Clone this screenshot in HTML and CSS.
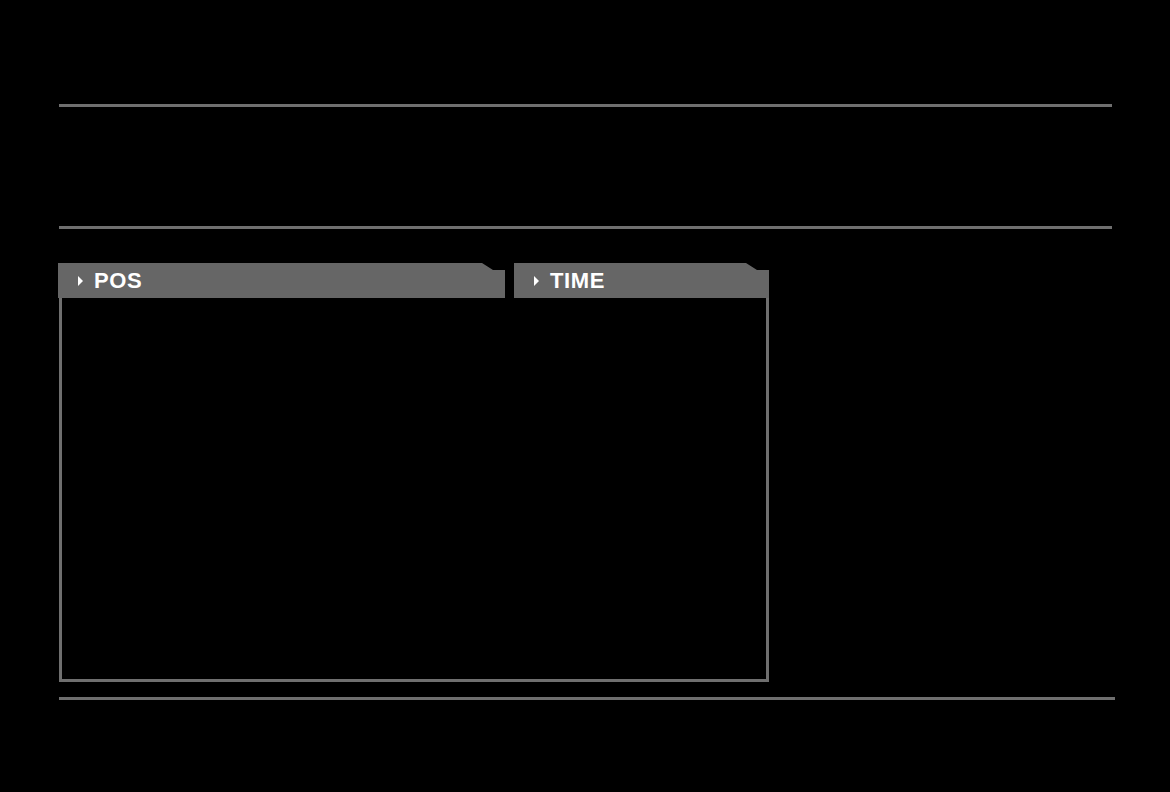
FILE: index.html
```html
<!DOCTYPE html>
<html>
<head>
<meta charset="utf-8">
<link rel="stylesheet" href="styles.css">
</head>
<body>
<div class="page">
  <div class="rule"></div>
  <div class="band"></div>
  <div class="rule"></div>
  <div class="panel">
    <div class="tabs">
      <div class="tab tab-pos"><span class="arrow"></span><span class="label">POS</span></div>
      <div class="tab tab-time"><span class="arrow"></span><span class="label">TIME</span></div>
    </div>
    <div class="box"></div>
  </div>
  <div class="rule rule-wide"></div>
</div>
</body>
</html>
```
FILE: styles.css
```css
html, body {
  margin: 0;
  padding: 0;
  background: #000;
}
.page {
  padding: 104px 0 0 59px;
  font-family: "Liberation Sans", Arial, sans-serif;
}
.rule {
  width: 1053px;
  height: 3px;
  background: #6f6f6f;
}
.rule-wide {
  width: 1056px;
  margin-top: 15px;
}
.band {
  height: 119px;
}
.panel {
  margin-top: 34px;
  width: 710px;
}
.tabs {
  display: flex;
  gap: 9px;
  height: 35px;
}
.tab {
  display: flex;
  align-items: center;
  background: #666;
  color: #fff;
  height: 35px;
  box-sizing: border-box;
  padding-left: 20px;
  padding-top: 1px;
  clip-path: polygon(0 0, calc(100% - 23px) 0, calc(100% - 12px) 7px, 100% 7px, 100% 100%, 0 100%);
}
.tab-pos {
  width: 447px;
  margin-left: -1px;
}
.tab-time {
  width: 255px;
}
.arrow {
  width: 0;
  height: 0;
  border-top: 5px solid transparent;
  border-bottom: 5px solid transparent;
  border-left: 5px solid #fff;
  margin-right: 11px;
}
.label {
  font-weight: bold;
  font-size: 22px;
  letter-spacing: 0.6px;
  line-height: 1;
}
.box {
  height: 381px;
  border: 3px solid #6f6f6f;
  border-top: none;
}
```
